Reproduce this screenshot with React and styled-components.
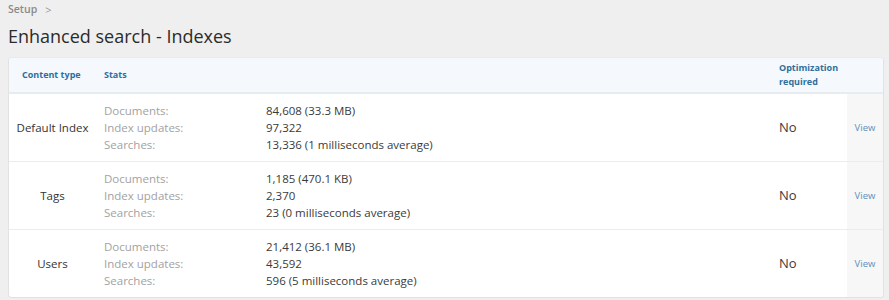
import React from "react";
import styled, { createGlobalStyle } from "styled-components";

const Global = createGlobalStyle`
  body {
    margin: 0;
    background: #efefef;
    font-family: "Open Sans", "Noto Sans", sans-serif;
    color: #333;
  }
`;

const Page = styled.div`
  padding: 2px 5px 0 8px;
`;

const Crumbs = styled.div`
  display: flex;
  align-items: center;
  gap: 8px;
  font-size: 10.5px;
  font-weight: 600;
  color: #8a8a8a;
  height: 14px;
`;

const Chevron = styled.span`
  font-weight: 400;
  color: #9a9a9a;
  font-size: 11px;
`;

const Title = styled.h1`
  margin: 9px 0 10px;
  font-size: 18px;
  font-weight: 400;
  color: #2b2b2b;
  line-height: 22px;
`;

const Card = styled.div`
  background: #fff;
  border: 1px solid #e2e2e2;
  border-top-color: #eaeaea;
  border-radius: 4px;
  overflow: hidden;
`;

const Table = styled.table`
  width: 100%;
  border-collapse: collapse;
  table-layout: fixed;
`;

const Head = styled.th`
  box-sizing: border-box;
  background: #f5f9fd;
  color: #2e6f9e;
  font-size: 9px;
  font-weight: 700;
  text-align: left;
  vertical-align: middle;
  height: 35px;
  padding: 0 0 0 ${(p) => p.$pad || 0}px;
  border-bottom: 2px solid #e7ecf0;
  line-height: 14px;
  width: ${(p) => (p.$w ? `${p.$w}px` : "auto")};
`;

const Row = styled.tr`
  height: 68px;
  & + & td {
    border-top: 1px solid #ececec;
  }
`;

const TypeCell = styled.td`
  font-size: 11.5px;
  color: #333;
  text-align: center;
  vertical-align: middle;
  padding: 0 8px 0 0;
`;

const StatsCell = styled.td`
  vertical-align: middle;
  padding: 0;
`;

const StatLine = styled.div`
  display: grid;
  grid-template-columns: 162px 1fr;
  font-size: 11.5px;
  line-height: 17px;
`;

const StatLabel = styled.span`
  color: #a2a2a2;
`;

const StatValue = styled.span`
  color: #3a3a3a;
`;

const OptCell = styled.td`
  font-size: 13px;
  color: #3a3a3a;
  vertical-align: middle;
  padding: 0;
`;

const ViewCell = styled.td`
  background: #f7f7f7;
  text-align: center;
  vertical-align: middle;
  font-size: 9.5px;
  color: #5b90bd;
  padding: 0;
`;

const rows = [
  {
    type: "Default Index",
    docs: "84,608 (33.3 MB)",
    updates: "97,322",
    searches: "13,336 (1 milliseconds average)",
  },
  {
    type: "Tags",
    docs: "1,185 (470.1 KB)",
    updates: "2,370",
    searches: "23 (0 milliseconds average)",
  },
  {
    type: "Users",
    docs: "21,412 (36.1 MB)",
    updates: "43,592",
    searches: "596 (5 milliseconds average)",
  },
];

const App = () => {
  return (
    <Page>
      <Global />
      <Crumbs>
        <span>Setup</span>
        <Chevron>&gt;</Chevron>
      </Crumbs>
      <Title>Enhanced search - Indexes</Title>
      <Card>
        <Table>
          <thead>
            <tr>
              <Head $w={95} $pad={13}>Content type</Head>
              <Head>Stats</Head>
              <Head $w={68}>
                Optimization
                <br />
                required
              </Head>
              <Head $w={36}></Head>
            </tr>
          </thead>
          <tbody>
            {rows.map((r) => (
              <Row key={r.type}>
                <TypeCell>{r.type}</TypeCell>
                <StatsCell>
                  <StatLine>
                    <StatLabel>Documents:</StatLabel>
                    <StatValue>{r.docs}</StatValue>
                  </StatLine>
                  <StatLine>
                    <StatLabel>Index updates:</StatLabel>
                    <StatValue>{r.updates}</StatValue>
                  </StatLine>
                  <StatLine>
                    <StatLabel>Searches:</StatLabel>
                    <StatValue>{r.searches}</StatValue>
                  </StatLine>
                </StatsCell>
                <OptCell>No</OptCell>
                <ViewCell>View</ViewCell>
              </Row>
            ))}
          </tbody>
        </Table>
      </Card>
    </Page>
  );
};

export default App;
